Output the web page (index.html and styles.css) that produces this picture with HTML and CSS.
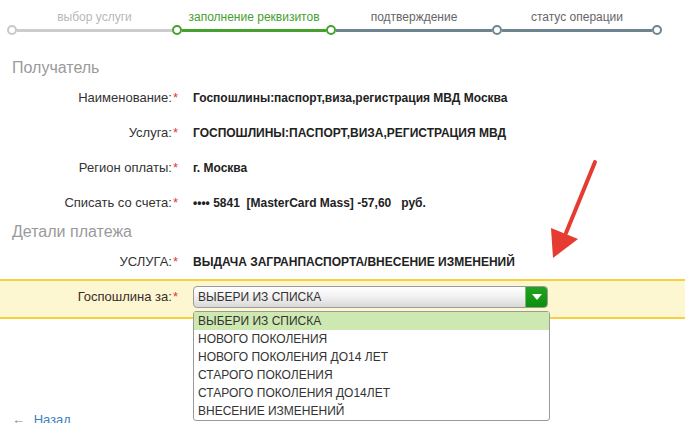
FILE: index.html
```html
<html>
  <head>
    <meta charset="utf-8">
    <link rel="stylesheet" href="styles.css">
  </head>
  <body>
    <div class="steps">
      <div class="steps__labels">
        <span class="steps__label steps__label--done">выбор услуги</span>
        <span class="steps__label steps__label--active">заполнение реквизитов</span>
        <span class="steps__label">подтверждение</span>
        <span class="steps__label">статус операции</span>
      </div>
      <div class="steps__track">
        <span class="dot dot--done"></span>
        <span class="bar bar--done bar--1"></span>
        <span class="dot dot--active"></span>
        <span class="bar bar--active bar--2"></span>
        <span class="dot dot--active"></span>
        <span class="bar bar--3"></span>
        <span class="dot"></span>
        <span class="bar bar--4"></span>
        <span class="dot"></span>
      </div>
    </div>

    <div class="section-title section-title--first">Получатель</div>
    <div class="row">
      <div class="row__label">Наименование:<i>*</i></div>
      <div class="row__value">Госпошлины:паспорт,виза,регистрация МВД Москва</div>
    </div>
    <div class="row">
      <div class="row__label">Услуга:<i>*</i></div>
      <div class="row__value">ГОСПОШЛИНЫ:ПАСПОРТ,ВИЗА,РЕГИСТРАЦИЯ МВД</div>
    </div>
    <div class="row">
      <div class="row__label">Регион оплаты:<i>*</i></div>
      <div class="row__value">г. Москва</div>
    </div>
    <div class="row">
      <div class="row__label">Списать со счета:<i>*</i></div>
      <div class="row__value">•••• 5841&nbsp; [MasterCard Mass] -57,60 &nbsp; руб.</div>
    </div>

    <div class="section-title">Детали платежа</div>
    <div class="row">
      <div class="row__label">УСЛУГА:<i>*</i></div>
      <div class="row__value">ВЫДАЧА ЗАГРАНПАСПОРТА/ВНЕСЕНИЕ ИЗМЕНЕНИЙ</div>
    </div>
    <div class="row row--highlight">
      <div class="row__label row__label--dark">Госпошлина за:<i>*</i></div>
      <div class="select">
        <div class="select__box">
          <span class="select__text">ВЫБЕРИ ИЗ СПИСКА</span>
          <span class="select__btn">
            <svg width="10" height="6" viewBox="0 0 10 6"><path d="M0 0 L10 0 L5 6 Z" fill="#fff"/></svg>
          </span>
        </div>
        <ul class="select__list">
          <li class="select__item select__item--hover">ВЫБЕРИ ИЗ СПИСКА</li>
          <li class="select__item">НОВОГО ПОКОЛЕНИЯ</li>
          <li class="select__item">НОВОГО ПОКОЛЕНИЯ ДО14 ЛЕТ</li>
          <li class="select__item">СТАРОГО ПОКОЛЕНИЯ</li>
          <li class="select__item">СТАРОГО ПОКОЛЕНИЯ ДО14ЛЕТ</li>
          <li class="select__item">ВНЕСЕНИЕ ИЗМЕНЕНИЙ</li>
        </ul>
      </div>
    </div>

    <div class="back">
      <span class="back__arrow">←</span>
      <a class="back__link" href="#">Назад</a>
    </div>

    <svg class="pointer" width="685" height="423" viewBox="0 0 685 423">
      <line x1="595" y1="162" x2="566" y2="233" stroke="#e53b30" stroke-width="4" stroke-linecap="round"/>
      <path d="M551 228 L578 239 L553 258 Z" fill="#e53b30"/>
    </svg>
  </body>
</html>
```

FILE: styles.css
```css
body {
	margin: 0;
	width: 685px;
	height: 423px;
	overflow: hidden;
	position: relative;
	font-family: "Liberation Sans", Arial, sans-serif;
	color: #333;
	background-color: #fff;
}

/* steps */
.steps {
	padding-top: 10px;
}

.steps__labels {
	display: grid;
	grid-template-columns: 165px 154px 166px 160px;
	padding-left: 12px;
	height: 14px;
}

.steps__label {
	font-size: 12px;
	line-height: 14px;
	text-align: center;
	color: #666;
}

.steps__label--done {
	color: #b8b8b8;
}

.steps__label--active {
	color: #45a02e;
}

.steps__track {
	display: flex;
	align-items: center;
	height: 10px;
	margin-top: 1px;
	padding-left: 7px;
}

.dot {
	box-sizing: border-box;
	width: 10px;
	height: 10px;
	border-radius: 50%;
	border: 2px solid #6f8491;
	background-color: #fff;
	flex: none;
}

.dot--done {
	border-color: #c8c8c8;
}

.dot--active {
	border-color: #45a02e;
}

.bar {
	height: 3px;
	background-color: #6f8491;
	flex: none;
}

.bar--done {
	background-color: #cccccc;
}

.bar--active {
	background-color: #45a02e;
}

.bar--1 { width: 155px; }
.bar--2 { width: 144px; }
.bar--3 { width: 156px; }
.bar--4 { width: 150px; }

/* form */
.section-title {
	height: 24px;
	line-height: 24px;
	padding-left: 12px;
	font-size: 16px;
	color: #9a9a9a;
}

.section-title--first {
	margin-top: 21px;
	height: 24px;
}

.row {
	display: flex;
	align-items: center;
	height: 35px;
}

.row__label {
	width: 178px;
	flex: none;
	text-align: right;
	font-size: 13px;
	color: #333;
}

.row__label i {
	font-style: normal;
	color: #e8343a;
	margin-left: 1px;
}

.row__label--dark {
	color: #3b2a2a;
}

.row__value {
	margin-left: 15px;
	font-size: 12px;
	font-weight: bold;
	color: #222;
}

.row--highlight {
	box-sizing: border-box;
	height: 40px;
	padding-bottom: 5px;
	background-color: #fdf7d1;
	border-top: 2px solid #f7d03f;
	border-bottom: 2px solid #f7d03f;
}

/* select */
.select {
	position: relative;
	margin-left: 15px;
}

.select__box {
	box-sizing: border-box;
	display: flex;
	align-items: center;
	width: 355px;
	height: 22px;
	border: 1px solid #9a9a9a;
	border-radius: 4px;
	background: linear-gradient(#ffffff, #f2f2f2 45%, #d9d9d9);
	overflow: hidden;
}

.select__text {
	flex: 1;
	padding-left: 4px;
	font-size: 12px;
	color: #333;
}

.select__btn {
	display: flex;
	align-items: center;
	justify-content: center;
	width: 21px;
	height: 100%;
	background: linear-gradient(#21a321, #0c8f0c);
	border-left: 1px solid #7ab67a;
}

.select__list {
	position: absolute;
	top: 25px;
	left: 0;
	box-sizing: border-box;
	width: 357px;
	margin: 0;
	padding: 0;
	list-style: none;
	background-color: #fff;
	border: 1px solid #9a9a9a;
	border-radius: 3px;
	z-index: 2;
}

.select__item {
	height: 18px;
	line-height: 18px;
	padding-left: 4px;
	font-size: 12px;
	color: #333;
}

.select__item--hover {
	background-color: #cde8b0;
}

/* back link */
.back {
	margin-top: 93px;
	padding-left: 12px;
	font-size: 13px;
	line-height: 16px;
}

.back__arrow {
	color: #888;
	font-size: 13px;
}

.back__link {
	margin-left: 5px;
	color: #3d7fbf;
	text-decoration: none;
}

.pointer {
	position: absolute;
	top: 0;
	left: 0;
	pointer-events: none;
}
```
